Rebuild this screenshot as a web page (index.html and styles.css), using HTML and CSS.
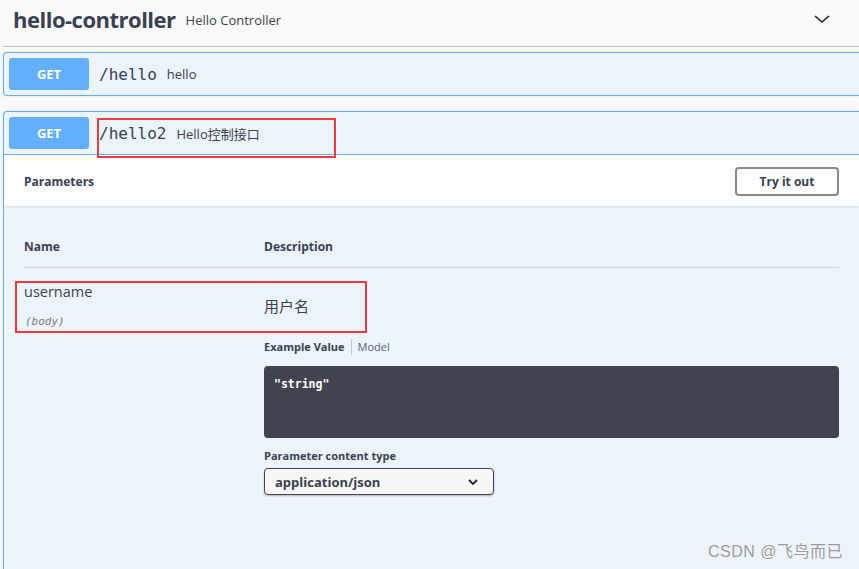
FILE: index.html
```html
<!DOCTYPE html>
<html lang="en">
<head>
    <meta charset="utf-8">
    <title>hello-controller</title>
    <link rel="stylesheet" href="styles.css">
</head>
<body>
<div class="tag-section">
    <div class="tag-head">
        <span class="tag-name">hello-controller</span>
        <span class="tag-desc">Hello Controller</span>
        <svg class="tag-arrow" width="20" height="20" viewBox="0 0 20 20">
            <path d="M3 7 L10 13 L17 7" fill="none" stroke="#222" stroke-width="1.6"/>
        </svg>
    </div>

    <div class="opblock">
        <div class="op-summary">
            <span class="method">GET</span>
            <span class="op-path">/hello</span>
            <span class="op-desc">hello</span>
        </div>
    </div>

    <div class="opblock opblock-open">
        <div class="op-summary op-summary-open">
            <span class="method">GET</span>
            <span class="op-path mark">/hello2</span>
            <span class="op-desc">Hello控制接口</span>
        </div>
        <div class="section-head">
            <span class="section-title">Parameters</span>
            <button class="try-btn">Try it out</button>
        </div>
        <div class="params">
            <div class="params-head">
                <div class="col-name">Name</div>
                <div class="col-desc">Description</div>
            </div>
            <div class="param-row">
                <div class="col-name param-name">
                    <div class="name-text">username</div>
                    <div class="param-in">(body)</div>
                </div>
                <div class="col-desc">
                    <div class="param-desc">用户名</div>
                    <div class="example-tabs">
                        <span class="tab tab-active">Example Value</span>
                        <span class="tab">Model</span>
                    </div>
                    <div class="code-box">"string"</div>
                    <div class="content-type">
                        <div class="content-label">Parameter content type</div>
                        <div class="select">
                            <span>application/json</span>
                            <svg width="12" height="8" viewBox="0 0 12 8">
                                <path d="M2 2 L6 6 L10 2" fill="none" stroke="#222" stroke-width="1.8"/>
                            </svg>
                        </div>
                    </div>
                </div>
            </div>
        </div>
    </div>
</div>
<div class="watermark">CSDN @飞鸟而已</div>
</body>
</html>
```

FILE: styles.css
```css
html, body {
    margin: 0;
    height: 100%;
    overflow: hidden;
}
body {
    background: #fafafa;
    font-family: "Open Sans", "Noto Sans CJK SC", sans-serif;
    color: #3b4151;
    position: relative;
}
.tag-section {
    display: flex;
    flex-direction: column;
    box-sizing: border-box;
    height: 100%;
    padding-left: 3px;
}
.tag-head {
    display: flex;
    align-items: center;
    flex-shrink: 0;
    box-sizing: border-box;
    height: 47px;
    padding: 0 0 9px 10px;
    border-bottom: 1px solid #c3c4c9;
}
.tag-name {
    font-size: 22px;
    font-weight: 700;
    letter-spacing: -0.5px;
}
.tag-desc {
    font-size: 13px;
    margin-left: 10px;
    margin-top: 2px;
}
.tag-arrow {
    margin-left: auto;
    margin-right: 27px;
}
.opblock {
    flex-shrink: 0;
    margin-top: 5px;
    margin-bottom: 15px;
    border: 1px solid #61affe;
    border-right: none;
    border-radius: 4px 0 0 4px;
    background: #ebf3fb;
    box-shadow: 0 0 3px rgba(0,0,0,.12);
}
.opblock-open {
    flex: 1;
    margin-top: 0;
    margin-bottom: 0;
    border-bottom: none;
    border-radius: 4px 0 0 0;
}
.op-summary {
    display: flex;
    align-items: center;
    padding: 5px;
}
.op-summary-open {
    border-bottom: 1px solid #61affe;
}
.method {
    width: 80px;
    height: 32px;
    line-height: 32px;
    text-align: center;
    background: #61affe;
    color: #fff;
    border-radius: 3px;
    font-size: 13px;
    font-weight: 700;
}
.op-path {
    font-family: "DejaVu Sans Mono", monospace;
    font-size: 16px;
    margin-left: 10px;
    padding-right: 10px;
}
.op-desc {
    font-size: 13px;
}
.mark {
    position: relative;
}
.mark::after {
    content: "";
    position: absolute;
    box-sizing: border-box;
    left: -2px;
    top: -6px;
    width: 239px;
    height: 40px;
    border: 2px solid #f03a3f;
}
.section-head {
    display: flex;
    align-items: center;
    justify-content: space-between;
    box-sizing: border-box;
    height: 51px;
    padding: 0 20px 0 20px;
    background: rgba(255,255,255,.8);
    box-shadow: 0 1px 2px rgba(0,0,0,.1);
}
.section-title {
    font-size: 12px;
    font-weight: 700;
    margin-top: 2px;
}
.try-btn {
    width: 104px;
    height: 29px;
    margin-top: 2px;
    border: 2px solid #888;
    border-radius: 4px;
    background: transparent;
    font-family: "Open Sans", sans-serif;
    font-size: 12px;
    font-weight: 700;
    color: #3b4151;
}
.params {
    padding: 20px 20px 0 20px;
}
.params-head {
    display: flex;
    padding: 12px 0 12px 0;
    border-bottom: 1px solid #cfd5de;
    font-size: 12px;
    font-weight: 700;
    width: 815px;
}
.col-name {
    width: 240px;
    flex-shrink: 0;
}
.param-row {
    display: flex;
}
.param-name {
    padding-top: 15px;
    position: relative;
}
.param-name::after {
    content: "";
    position: absolute;
    box-sizing: border-box;
    left: -9px;
    top: 13px;
    width: 352px;
    height: 52px;
    border: 2px solid #f03a3f;
}
.name-text {
    font-size: 14.5px;
    line-height: 18px;
}
.param-in {
    font-family: "DejaVu Sans Mono", monospace;
    font-size: 11px;
    font-style: italic;
    color: #808080;
    margin-top: 14px;
    margin-left: 1px;
}
.param-desc {
    font-family: "Noto Sans CJK SC", sans-serif;
    font-size: 15px;
    margin-top: 28px;
    line-height: 20px;
}
.example-tabs {
    display: flex;
    align-items: center;
    margin-top: 23px;
    font-size: 11px;
}
.tab {
    line-height: 16px;
}
.tab-active {
    font-weight: 700;
    padding-right: 6px;
    border-right: 1px solid #c6c9cf;
}
.tab + .tab {
    padding-left: 6px;
    color: #5b6275;
}
.code-box {
    box-sizing: border-box;
    width: 575px;
    height: 72px;
    margin-top: 11px;
    padding: 11px 10px;
    background: #41444e;
    border-radius: 4px;
    color: #fff;
    font-family: "DejaVu Sans Mono", monospace;
    font-size: 11.5px;
    font-weight: 700;
}
.content-type {
    margin-top: 10px;
}
.content-label {
    font-size: 11px;
    font-weight: 700;
}
.select {
    display: flex;
    align-items: center;
    justify-content: space-between;
    box-sizing: border-box;
    width: 230px;
    height: 27px;
    margin-top: 5px;
    padding: 0 14px 0 10px;
    background: #f7f7f7;
    border: 1px solid #41444e;
    border-radius: 4px;
    box-shadow: 0 1px 2px rgba(0,0,0,.25);
    font-size: 13px;
    font-weight: 700;
}
.watermark {
    position: absolute;
    right: 16px;
    bottom: 7px;
    font-family: "Liberation Sans", "Noto Sans CJK SC", sans-serif;
    font-size: 16px;
    letter-spacing: 0.5px;
    color: #9a9a9a;
    text-shadow: 0 0 1px #fff;
}
```
